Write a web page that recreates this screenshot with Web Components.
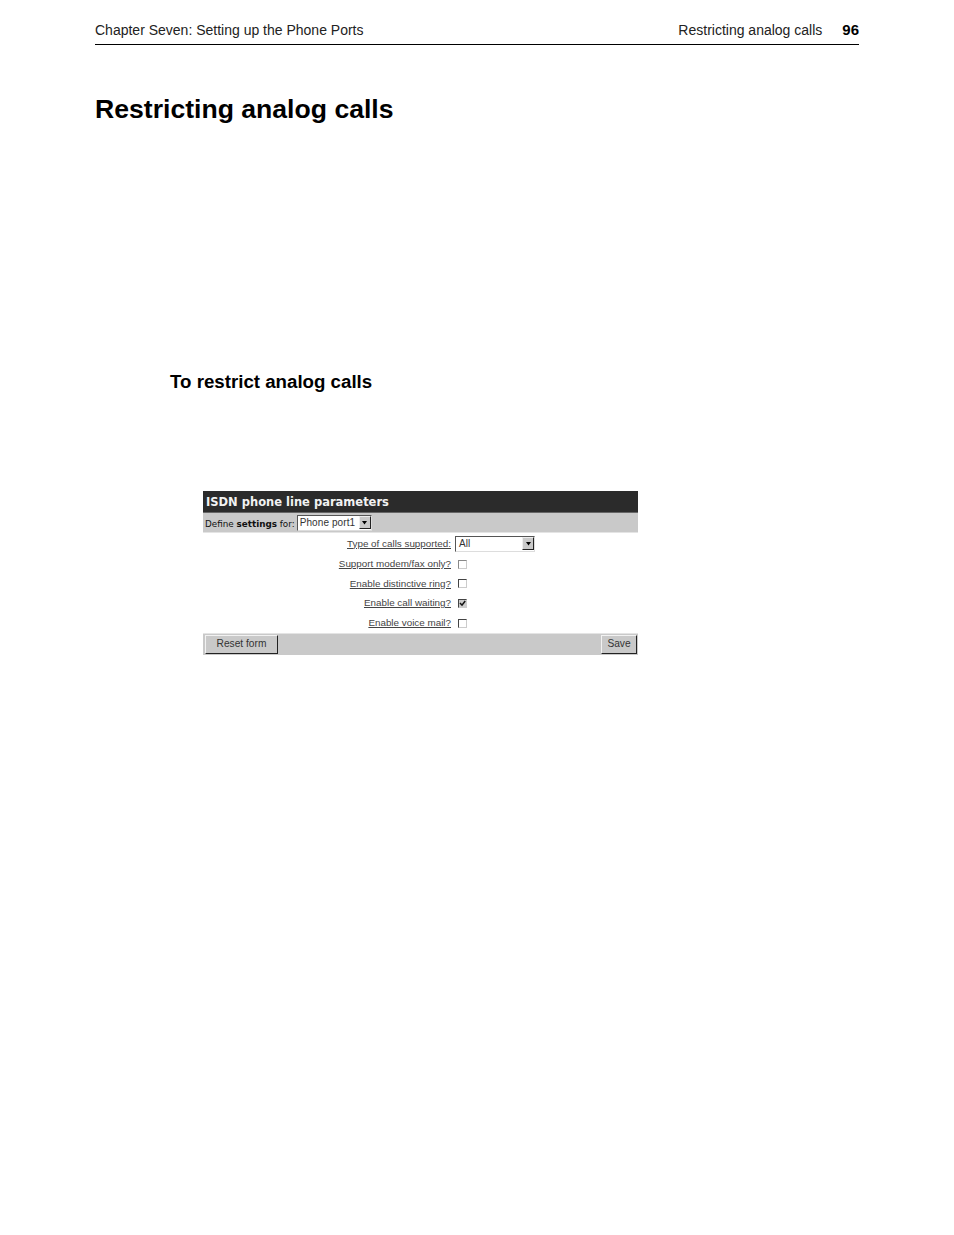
<!DOCTYPE html>
<html lang="en">

<head>
    <meta charset="UTF-8">
    <meta name="viewport" content="width=device-width, initial-scale=1.0">
    <title>Restricting analog calls</title>
    <style>
        html, body { margin: 0; background: #fff; }
    </style>
</head>

<body>
    <manual-page>
        <running-head slot="head" chapter="Chapter Seven: Setting up the Phone Ports" section="Restricting analog calls" page="96"></running-head>
        <h-title slot="title">Restricting analog calls</h-title>
        <h-sub slot="sub">To restrict analog calls</h-sub>
        <isdn-panel slot="figure" heading="ISDN phone line parameters">
            <span slot="define">Define <b>settings</b> for:</span>
            <win-select slot="define-control" value="Phone port1" w="75" pad="2"></win-select>

            <form-row label="Type of calls supported:" h="21"><win-select value="All" w="80" pad="3"></win-select></form-row>
            <form-row label="Support modem/fax only?" h="20"><win-check dim></win-check></form-row>
            <form-row label="Enable distinctive ring?" h="19"><win-check></win-check></form-row>
            <form-row label="Enable call waiting?" h="20"><win-check checked></win-check></form-row>
            <form-row label="Enable voice mail?" h="20"><win-check></win-check></form-row>

            <win-button slot="left" w="73">Reset form</win-button>
            <win-button slot="right" w="36">Save</win-button>
        </isdn-panel>
    </manual-page>

    <script>
        // page frame
        class ManualPage extends HTMLElement {
            constructor() {
                super();
                this.attachShadow({ mode: 'open' }).innerHTML = `
                    <style>
                        :host { display: block; width: 954px; height: 1235px; box-sizing: border-box; padding: 21px 95px 0; overflow: hidden; color: #000; font-family: "Liberation Sans", Arial, sans-serif; }
                        .title { display: block; margin-top: 47px; }
                        .sub { display: block; margin: 244px 0 0 75px; }
                        .figure { display: block; margin: 97px 0 0 108px; }
                    </style>
                    <slot name="head"></slot>
                    <div class="title"><slot name="title"></slot></div>
                    <div class="sub"><slot name="sub"></slot></div>
                    <div class="figure"><slot name="figure"></slot></div>
                `;
            }
        }

        class RunningHead extends HTMLElement {
            constructor() {
                super();
                this.attachShadow({ mode: 'open' });
            }
            connectedCallback() {
                this.shadowRoot.innerHTML = `
                    <style>
                        :host { display: block; padding-bottom: 5px; border-bottom: 1px solid #000; font-size: 14px; line-height: 18px; color: #222; }
                        .row { display: flex; height: 18px; }
                        .sec { margin-left: auto; }
                        .num { margin-left: 20px; font-size: 15px; font-weight: bold; color: #000; }
                    </style>
                    <div class="row">
                        <span>${this.getAttribute('chapter')}</span>
                        <span class="sec">${this.getAttribute('section')}</span>
                        <span class="num">${this.getAttribute('page')}</span>
                    </div>
                `;
            }
        }

        class HTitle extends HTMLElement {
            constructor() {
                super();
                this.attachShadow({ mode: 'open' }).innerHTML = `
                    <style>:host { display: block; font-size: 26.6px; font-weight: bold; line-height: 34px; }</style>
                    <slot></slot>`;
            }
        }

        class HSub extends HTMLElement {
            constructor() {
                super();
                this.attachShadow({ mode: 'open' }).innerHTML = `
                    <style>:host { display: block; font-size: 18.7px; font-weight: bold; line-height: 24px; }</style>
                    <slot></slot>`;
            }
        }

        // the screenshot inside the manual
        class IsdnPanel extends HTMLElement {
            constructor() {
                super();
                this.attachShadow({ mode: 'open' });
            }
            connectedCallback() {
                this.shadowRoot.innerHTML = `
                    <style>
                        :host { display: block; width: 435px; font-family: "Liberation Sans", Arial, sans-serif; font-size: 10px; color: #222; }
                        .title { height: 22px; background: #2b2b2b; color: #f2f2f2; font: bold 11.5px/22px "DejaVu Sans", Verdana, sans-serif; padding-left: 3px; border-bottom: 1px solid #666; box-sizing: border-box; white-space: nowrap; }
                        .define { height: 20px; background: #c9c9c9; display: flex; align-items: center; gap: 2px; padding-left: 2px; font: 8.8px "DejaVu Sans", Verdana, sans-serif; color: #111; border-bottom: 1px solid #e4e4e4; box-sizing: border-box; white-space: nowrap; }
                        .define ::slotted(span) { padding-top: 2px; }
                        .rows { display: block; }
                        .foot { height: 22px; background: #c9c9c9; display: flex; align-items: flex-start; justify-content: space-between; padding: 1px 1px 0 2px; border-top: 1px solid #e4e4e4; box-sizing: border-box; }
                    </style>
                    <div class="title">${this.getAttribute('heading')}</div>
                    <div class="define"><slot name="define"></slot><slot name="define-control"></slot></div>
                    <div class="rows"><slot></slot></div>
                    <div class="foot"><slot name="left"></slot><slot name="right"></slot></div>
                `;
            }
        }

        class FormRow extends HTMLElement {
            constructor() {
                super();
                this.attachShadow({ mode: 'open' });
            }
            connectedCallback() {
                const h = this.getAttribute('h') || 20;
                this.shadowRoot.innerHTML = `
                    <style>
                        :host { display: grid; grid-template-columns: 248px 1fr; column-gap: 4px; align-items: center; height: ${h}px; }
                        .lbl { text-align: right; text-decoration: underline; font-size: 9.85px; line-height: 11px; padding-bottom: 1px; color: #444; white-space: nowrap; }
                    </style>
                    <span class="lbl">${this.getAttribute('label')}</span>
                    <div><slot></slot></div>
                `;
            }
        }

        class WinSelect extends HTMLElement {
            constructor() {
                super();
                this.attachShadow({ mode: 'open' });
            }
            connectedCallback() {
                const w = this.getAttribute('w') || 80;
                const pad = this.getAttribute('pad') || 2;
                this.shadowRoot.innerHTML = `
                    <style>
                        :host { display: inline-flex; vertical-align: middle; align-items: center; box-sizing: border-box; width: ${w}px; height: 16px; background: #fff; border: 1px solid; border-color: #555 #ddd #ddd #555; font: 10px "Liberation Sans", Arial, sans-serif; letter-spacing: 0.1px; color: #333; padding-left: ${pad}px; }
                        .val { flex: 1; white-space: nowrap; }
                        .arrow { width: 12px; height: 13px; background: #c9c9c9; border: 1px solid; border-color: #eee #222 #222 #eee; box-sizing: border-box; display: flex; align-items: center; justify-content: center; }
                        svg { display: block; }
                    </style>
                    <span class="val">${this.getAttribute('value')}</span>
                    <span class="arrow"><svg width="7" height="4" viewBox="0 0 7 4"><path d="M1 0h5L3.5 3.5z" fill="#000"/></svg></span>
                `;
            }
        }

        class WinCheck extends HTMLElement {
            constructor() {
                super();
                this.attachShadow({ mode: 'open' });
            }
            connectedCallback() {
                const mark = this.hasAttribute('checked')
                    ? '<svg width="7" height="7" viewBox="0 0 7 7"><path d="M1 3l2 2.2L6.2 1" fill="none" stroke="#111" stroke-width="1.5"/></svg>'
                    : '';
                const edge = this.hasAttribute('dim') ? '#888' : '#444';
                this.shadowRoot.innerHTML = `
                    <style>
                        :host { display: block; box-sizing: border-box; width: 9px; height: 9px; margin-left: 3px; background: ${this.hasAttribute('checked') ? '#ccc' : '#fff'}; border: 1px solid; border-color: ${edge} #ccc #ccc ${edge}; }
                        svg { display: block; }
                    </style>
                    ${mark}
                `;
            }
        }

        class WinButton extends HTMLElement {
            constructor() {
                super();
                this.attachShadow({ mode: 'open' });
            }
            connectedCallback() {
                this.shadowRoot.innerHTML = `
                    <style>
                        :host { display: flex; align-items: center; justify-content: center; box-sizing: border-box; width: ${this.getAttribute('w')}px; height: 19px; padding-bottom: 2px; background: #c9c9c9; border: 1px solid; border-color: #f2f2f2 #222 #222 #f2f2f2; font: 10.2px "Liberation Sans", Arial, sans-serif; color: #333; }
                    </style>
                    <slot></slot>
                `;
            }
        }

        customElements.define('manual-page', ManualPage);
        customElements.define('running-head', RunningHead);
        customElements.define('h-title', HTitle);
        customElements.define('h-sub', HSub);
        customElements.define('isdn-panel', IsdnPanel);
        customElements.define('form-row', FormRow);
        customElements.define('win-select', WinSelect);
        customElements.define('win-check', WinCheck);
        customElements.define('win-button', WinButton);
    </script>
</body>

</html>
